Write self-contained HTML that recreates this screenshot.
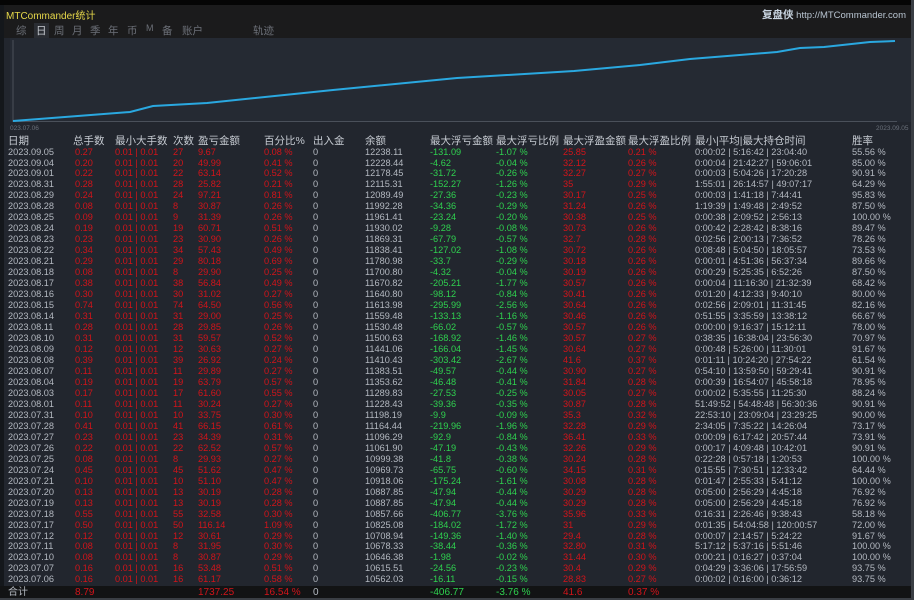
<!DOCTYPE html>
<html><head><meta charset="utf-8"><style>
*{margin:0;padding:0;box-sizing:border-box}
body{width:914px;height:600px;background:#22262e;overflow:hidden;position:relative;font-family:"Liberation Sans","Noto Sans CJK SC",sans-serif;color:#b4b9c1}
.top{position:absolute;left:0;top:0;width:914px;height:5px;background:#050505}
.bar{position:absolute;left:0;top:5px;width:914px;height:33px;background:#1b1b1c}
.title{position:absolute;left:6px;top:7px;font-size:10px;color:#e6d84a}
.brand{position:absolute;right:8px;top:7px;font-size:9.5px;color:#b8c4d0}
.brand b{font-size:10.5px;font-weight:bold;color:#c8d4e0}
.tabs{position:absolute;top:23px;font-size:10.5px;color:#6c7078}
.chart{position:absolute;left:10px;top:38px;width:904px;height:84px;background:#252a33}
.side{position:absolute;left:0;top:5px;width:4px;height:590px;background:#14171b}
.row{position:absolute;left:8px;height:11px;font-size:9.2px;line-height:11px;white-space:nowrap}
.row span{position:absolute;top:0}
.h{font-size:10.5px;color:#c6cbd2}
.r{color:#d3141a}.g{color:#2fd14f}
.tot{position:absolute;left:0;top:586px;width:912px;height:12px;background:#121314}
</style></head><body>
<div class="top"></div><div class="bar"></div>
<div class="title">MTCommander统计</div>
<div class="brand"><b>复盘侠</b> http://MTCommander.com</div>
<div class="tabs" style="left:16px">综</div>
<div class="tabs" style="left:34px;color:#c8ccd2;background:#2a2d33;padding:0 2px">日</div>
<div class="tabs" style="left:54px">周</div>
<div class="tabs" style="left:72px">月</div>
<div class="tabs" style="left:90px">季</div>
<div class="tabs" style="left:108px">年</div>
<div class="tabs" style="left:127px">币</div>
<div class="tabs" style="left:146px;font-size:9px">M</div>
<div class="tabs" style="left:162px">备</div>
<div class="tabs" style="left:182px">账户</div>
<div class="tabs" style="left:253px">轨迹</div>
<div class="side"></div>
<div class="chart"></div>
<svg style="position:absolute;left:0;top:0" width="914" height="135">
<line x1="13" y1="40" x2="13" y2="122" stroke="#4a505a" stroke-width="1"/>
<line x1="13" y1="121.5" x2="897" y2="121.5" stroke="#4a505a" stroke-width="1"/>
<polyline fill="none" stroke="#2aa8e0" stroke-width="2" points="13,121 130,112 153,106 207,103 333,90 457,78 574,71 640,65 690,59 777,52 800,48 824,47 870,42 895,41"/>
<text x="10" y="130" font-size="6.5" fill="#6a707a" font-family="Liberation Sans">023.07.06</text>
<text x="876" y="130" font-size="6.5" fill="#6a707a" font-family="Liberation Sans">2023.09.05</text>
</svg>
<div class="tot"></div>
<div id="t"></div>
<script>
var L=[0,65,107,165,190,256,305,357,422,488,555,620,687,844];
var H=["日期","总手数","最小大手数","次数","盈亏金额","百分比%","出入金","余额","最大浮亏金额","最大浮亏比例","最大浮盈金额","最大浮盈比例","最小|平均|最大持仓时间","胜率"];
var DT="09.05 09.04 09.01 08.31 08.29 08.28 08.25 08.24 08.23 08.22 08.21 08.18 08.17 08.16 08.15 08.14 08.11 08.10 08.09 08.08 08.07 08.04 08.03 08.01 07.31 07.28 07.27 07.26 07.25 07.24 07.21 07.20 07.19 07.18 07.17 07.12 07.11 07.10 07.07 07.06".split(" ");
var D=`09.05 0.27 27 9.67 0.08 12238.11 -131.09 -1.07 25.85 0.21 0:00:02|5:16:42|23:04:40 55.56
09.04 0.20 20 49.99 0.41 12228.44 -4.62 -0.04 32.12 0.26 0:00:04|21:42:27|59:06:01 85.00
09.01 0.22 22 63.14 0.52 12178.45 -31.72 -0.26 32.27 0.27 0:00:03|5:04:26|17:20:28 90.91
08.31 0.28 28 25.82 0.21 12115.31 -152.27 -1.26 35 0.29 1:55:01|26:14:57|49:07:17 64.29
08.29 0.24 24 97.21 0.81 12089.49 -27.36 -0.23 30.17 0.25 0:00:03|1:41:18|7:44:41 95.83
08.28 0.08 8 30.87 0.26 11992.28 -34.36 -0.29 31.24 0.26 1:19:39|1:49:48|2:49:52 87.50
08.25 0.09 9 31.39 0.26 11961.41 -23.24 -0.20 30.38 0.25 0:00:38|2:09:52|2:56:13 100.00
08.24 0.19 19 60.71 0.51 11930.02 -9.28 -0.08 30.73 0.26 0:00:42|2:28:42|8:38:16 89.47
08.23 0.23 23 30.90 0.26 11869.31 -67.79 -0.57 32.7 0.28 0:02:56|2:00:13|7:36:52 78.26
08.22 0.34 34 57.43 0.49 11838.41 -127.02 -1.08 30.72 0.26 0:08:48|5:04:50|18:05:57 73.53
08.21 0.29 29 80.18 0.69 11780.98 -33.7 -0.29 30.18 0.26 0:00:01|4:51:36|56:37:34 89.66
08.18 0.08 8 29.90 0.25 11700.80 -4.32 -0.04 30.19 0.26 0:00:29|5:25:35|6:52:26 87.50
08.17 0.38 38 56.84 0.49 11670.82 -205.21 -1.77 30.57 0.26 0:00:04|11:16:30|21:32:39 68.42
08.16 0.30 30 31.02 0.27 11640.80 -98.12 -0.84 30.41 0.26 0:01:20|4:12:33|9:40:10 80.00
08.15 0.74 74 64.50 0.56 11613.98 -295.99 -2.56 30.64 0.26 0:02:56|2:09:01|11:31:45 82.16
08.14 0.31 31 29.00 0.25 11559.48 -133.13 -1.16 30.46 0.26 0:51:55|3:35:59|13:38:12 66.67
08.11 0.28 28 29.85 0.26 11530.48 -66.02 -0.57 30.57 0.26 0:00:00|9:16:37|15:12:11 78.00
08.10 0.31 31 59.57 0.52 11500.63 -168.92 -1.46 30.57 0.27 0:38:35|16:38:04|23:56:30 70.97
08.09 0.12 12 30.63 0.27 11441.06 -166.04 -1.45 30.64 0.27 0:00:48|5:26:00|11:30:01 91.67
08.08 0.39 39 26.92 0.24 11410.43 -303.42 -2.67 41.6 0.37 0:01:11|10:24:20|27:54:22 61.54
08.07 0.11 11 29.89 0.27 11383.51 -49.57 -0.44 30.90 0.27 0:54:10|13:59:50|59:29:41 90.91
08.04 0.19 19 63.79 0.57 11353.62 -46.48 -0.41 31.84 0.28 0:00:39|16:54:07|45:58:18 78.95
08.03 0.17 17 61.60 0.55 11289.83 -27.53 -0.25 30.05 0.27 0:00:02|5:35:55|11:25:30 88.24
08.01 0.11 11 30.24 0.27 11228.43 -39.36 -0.35 30.87 0.28 51:49:52|54:48:48|56:30:36 90.91
07.31 0.10 10 33.75 0.30 11198.19 -9.9 -0.09 35.3 0.32 22:53:10|23:09:04|23:29:25 90.00
07.28 0.41 41 66.15 0.61 11164.44 -219.96 -1.96 32.28 0.29 2:34:05|7:35:22|14:26:04 73.17
07.27 0.23 23 34.39 0.31 11096.29 -92.9 -0.84 36.41 0.33 0:00:09|6:17:42|20:57:44 73.91
07.26 0.22 22 62.52 0.57 11061.90 -47.19 -0.43 32.26 0.29 0:00:17|4:09:48|10:42:01 90.91
07.25 0.08 8 29.93 0.27 10999.38 -41.8 -0.38 30.24 0.28 0:22:28|0:57:18|1:20:53 100.00
07.24 0.45 45 51.62 0.47 10969.73 -65.75 -0.60 34.15 0.31 0:15:55|7:30:51|12:33:42 64.44
07.21 0.10 10 51.10 0.47 10918.06 -175.24 -1.61 30.08 0.28 0:01:47|2:55:33|5:41:12 100.00
07.20 0.13 13 30.19 0.28 10887.85 -47.94 -0.44 30.29 0.28 0:05:00|2:56:29|4:45:18 76.92
07.19 0.13 13 30.19 0.28 10887.85 -47.94 -0.44 30.29 0.28 0:05:00|2:56:29|4:45:18 76.92
07.18 0.55 55 32.58 0.30 10857.66 -406.77 -3.76 35.96 0.33 0:16:31|2:26:46|9:38:43 58.18
07.17 0.50 50 116.14 1.09 10825.08 -184.02 -1.72 31 0.29 0:01:35|54:04:58|120:00:57 72.00
07.12 0.12 12 30.61 0.29 10708.94 -149.36 -1.40 29.4 0.28 0:00:07|2:14:57|5:24:22 91.67
07.11 0.08 8 31.95 0.30 10678.33 -38.44 -0.36 32.80 0.31 5:17:12|5:37:16|5:51:46 100.00
07.10 0.08 8 30.87 0.29 10646.38 -1.98 -0.02 31.44 0.30 0:00:21|0:16:27|0:37:04 100.00
07.07 0.16 16 53.48 0.51 10615.51 -24.56 -0.23 30.4 0.29 0:04:29|3:36:06|17:56:59 93.75
07.06 0.16 16 61.17 0.58 10562.03 -16.11 -0.15 28.83 0.27 0:00:02|0:16:00|0:36:12 93.75`.split("\n");
var h='<div class="row h" style="top:136px">';
H.forEach(function(x,i){h+='<span style="left:'+L[i]+'px">'+x+'</span>'});
h+='</div>';
function row(top,c,cls,fs){var s='<div class="row" style="top:'+top+'px'+(fs?';font-size:'+fs+'px':'')+'">';c.forEach(function(x,i){if(x!=="")s+='<span class="'+cls[i]+'" style="left:'+(L[i]+(i==1?2:0))+'px">'+x+'</span>'});return s+'</div>';}
var cl=["","r","r","r","r","r","","","g","g","r","r","",""];
D.forEach(function(l,k){var p=l.split(" ");
var c=["2023."+DT[k],p[1],"0.01 | 0.01",p[2],p[3],p[4]+" %","0",p[5],p[6],p[7]+" %",p[8],p[9]+" %",p[10].split("|").join(" | "),p[11]+" %"];
h+=row((146.5+k*10.97).toFixed(1),c,cl);});
h+=row(587,["合计","8.79","","","1737.25","16.54 %","0","","-406.77","-3.76 %","41.6","0.37 %","",""],cl,10);
document.getElementById("t").innerHTML=h;
</script>
<div style="position:absolute;left:911px;top:0;width:3px;height:600px;background:#3a3e44"></div>
<div style="position:absolute;left:0;top:598px;width:914px;height:2px;background:#3a3e44"></div>
</body></html>
